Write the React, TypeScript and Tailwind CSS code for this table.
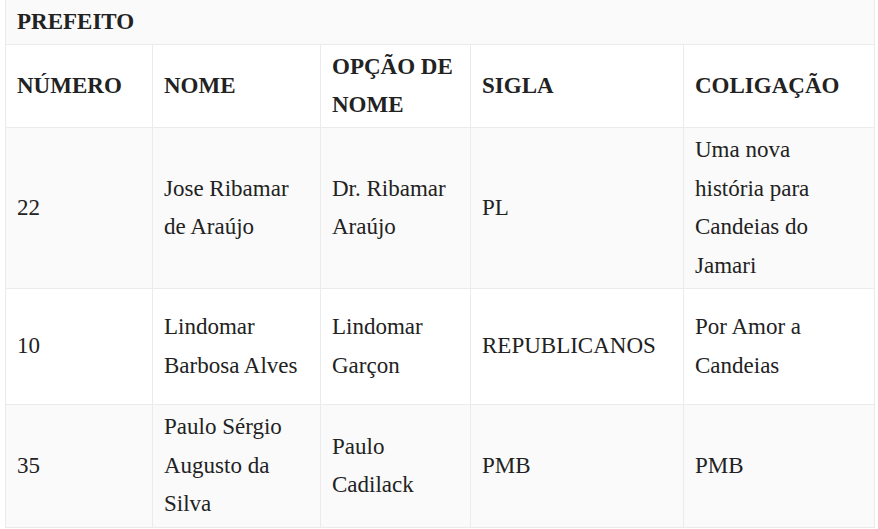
import React from "react"

type Row = {
  cells: string[][]
  height: string
  bg: string
  bold?: boolean
}

const rows: Row[] = [
  {
    cells: [["NÚMERO"], ["NOME"], ["OPÇÃO DE", "NOME"], ["SIGLA"], ["COLIGAÇÃO"]],
    height: "h-[83px]",
    bg: "bg-white",
    bold: true
  },
  {
    cells: [
      ["22"],
      ["Jose Ribamar", "de Araújo"],
      ["Dr. Ribamar", "Araújo"],
      ["PL"],
      ["Uma nova", "história para", "Candeias do", "Jamari"]
    ],
    height: "h-[161px]",
    bg: "bg-[#fafafa]"
  },
  {
    cells: [
      ["10"],
      ["Lindomar", "Barbosa Alves"],
      ["Lindomar", "Garçon"],
      ["REPUBLICANOS"],
      ["Por Amor a", "Candeias"]
    ],
    height: "h-[116px]",
    bg: "bg-white"
  },
  {
    cells: [
      ["35"],
      ["Paulo Sérgio", "Augusto da", "Silva"],
      ["Paulo", "Cadilack"],
      ["PMB"],
      ["PMB"]
    ],
    height: "h-[123px]",
    bg: "bg-[#fafafa]"
  }
]

function Cell({ lines, row, last }: { lines: string[]; row: Row; last: boolean }) {
  return (
    <div
      className={`flex items-center pl-[11px] border-l border-b border-[#ebebeb] ${row.height} ${row.bg} ${
        last ? "border-r" : ""
      }`}
    >
      <p
        className={`font-['Liberation_Serif'] whitespace-nowrap leading-[38.5px] ${
          row.bold ? "font-bold" : "font-normal"
        }`}
      >
        {lines.map((line, i) => (
          <React.Fragment key={i}>
            {i > 0 && <br />}
            {line}
          </React.Fragment>
        ))}
      </p>
    </div>
  )
}

export default function App() {
  return (
    <div className="w-[878px] h-[529px] bg-white overflow-hidden">
      <div className="ml-[5px] grid grid-cols-[147px_168px_150px_213px_192px] text-[23px] text-[#222]">
        {/* cabeçalho do cargo */}
        <div className="col-span-5 h-[45px] flex items-center pl-[11px] bg-[#fafafa] border-l border-r border-b border-[#ebebeb]">
          <p className="font-['Liberation_Serif'] font-bold">PREFEITO</p>
        </div>

        {rows.map((row, r) =>
          row.cells.map((lines, c) => (
            <Cell key={`${r}-${c}`} lines={lines} row={row} last={c === 4} />
          ))
        )}
      </div>
    </div>
  )
}
